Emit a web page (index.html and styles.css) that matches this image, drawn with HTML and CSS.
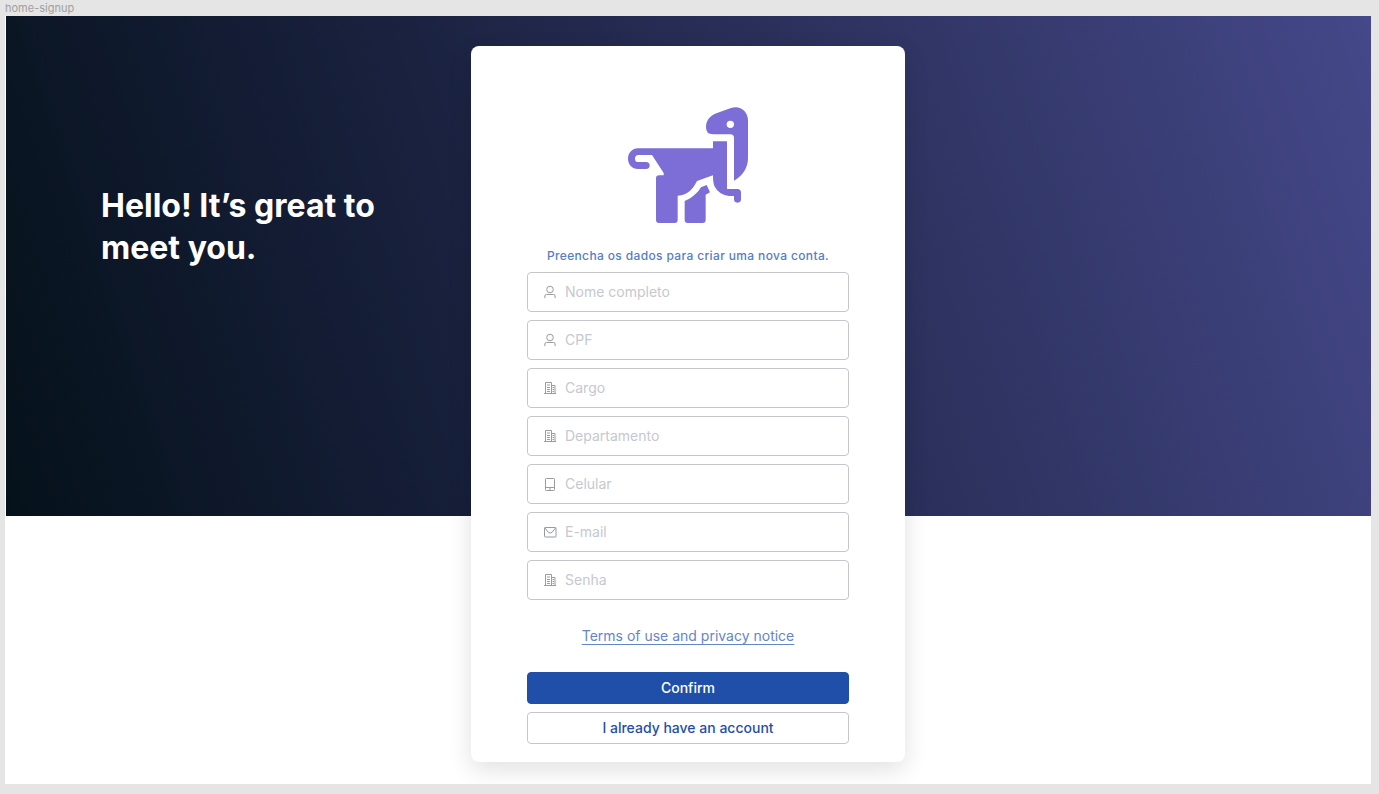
FILE: index.html
```html
<!DOCTYPE html>
<html lang="pt-BR">
<head>
<meta charset="utf-8">
<meta name="viewport" content="width=device-width, initial-scale=1">
<title>home-signup</title>
<link rel="stylesheet" href="styles.css">
</head>
<body>
<svg class="sprite" aria-hidden="true">
  <symbol id="user" viewBox="0 0 16 16"><circle cx="8" cy="5.500" r="3.300"/><path d="M2.900 14.200v-2.200a1.500 1.500 0 0 1 1.500-1.500h7.200a1.500 1.500 0 0 1 1.500 1.500v2.200"/></symbol>
  <symbol id="building" viewBox="0 0 16 16"><path d="M2 13.500h12M3.500 13.500v-11h6v11M9.500 5.500h3.500v8M5 5h3M5 7.500h3M5 9.500h3M5 11.500h3M10.500 7.500h1.500M10.500 9.500h1.500M10.500 11.500h1.500"/></symbol>
  <symbol id="tablet" viewBox="0 0 16 16"><rect x="3.500" y="2.500" width="9" height="12" rx=".8"/><path d="M3.500 11.500h9M8 12v2"/></symbol>
  <symbol id="mail" viewBox="0 0 16 16"><rect x="2.500" y="3.500" width="11.500" height="9.500" rx=".6"/><path d="M3 4l3.200 4.200q2 1.800 4 0L13.500 4"/></symbol>
</svg>
<div class="frame-label">home-signup</div>
<main class="frame">
  <section class="hero">
    <h1 class="hero-title">Hello! It’s great to meet you.</h1>
  </section>
  <form class="card">
    <svg class="logo" viewBox="24 21 360 348" role="img" aria-label="Dinosaur">
      <path d="M258 82C258 62 270 47 289 40L333 24C360 15 384 34 384 61V174C384 204 368 228 342 242V114Q342 103 331 103H279Q258 103 258 82Z"/>
      <path d="M279 124H321V267H352Q363 267 363 278V298Q363 308 352.500 308Q342 308 342 298V288H327Q296 284 283 258Q279 248 279 226L231 243C219 266 205 285 173 287V360Q173 369 164 369H117Q108 369 108 360V235Q108 226 117 226H131V219L96 165H55Q45 166 45 176Q45 186 55 186H78Q89 187 89 196Q89 207 78 207H54C36 207 24 193 24 176C24 158 37 145 54 145H279Z"/>
      <path d="M194 303C216 294 231 281 243 262L260 255L270 277L257 284V360Q257 369 248 369H203Q194 369 194 360Z"/>
      <circle class="logo-eye" cx="331" cy="73" r="11"/>
    </svg>
    <p class="intro">Preencha os dados para criar uma nova conta.</p>
    <div class="fields">
      <label class="field"><svg class="icon"><use href="#user"/></svg><input class="field-input" type="text" aria-label="Nome completo" placeholder="Nome completo"></label>
      <label class="field"><svg class="icon"><use href="#user"/></svg><input class="field-input" type="text" aria-label="CPF" placeholder="CPF"></label>
      <label class="field"><svg class="icon"><use href="#building"/></svg><input class="field-input" type="text" aria-label="Cargo" placeholder="Cargo"></label>
      <label class="field"><svg class="icon"><use href="#building"/></svg><input class="field-input" type="text" aria-label="Departamento" placeholder="Departamento"></label>
      <label class="field"><svg class="icon"><use href="#tablet"/></svg><input class="field-input" type="tel" aria-label="Celular" placeholder="Celular"></label>
      <label class="field"><svg class="icon"><use href="#mail"/></svg><input class="field-input" type="email" aria-label="E-mail" placeholder="E-mail"></label>
      <label class="field"><svg class="icon"><use href="#building"/></svg><input class="field-input" type="password" aria-label="Senha" placeholder="Senha"></label>
    </div>
    <a class="terms" href="#">Terms of use and privacy notice</a>
    <div class="actions">
      <button class="button button-primary" type="submit">Confirm</button>
      <button class="button" type="button">I already have an account</button>
    </div>
  </form>
</main>
</body>
</html>
```
FILE: styles.css
```css
* { box-sizing: border-box; }

body {
  margin: 0;
  min-height: 100vh;
  padding: 0 8px 10px 5px;
  display: flex;
  flex-direction: column;
  background: #e5e5e5;
  font-family: Inter, "Liberation Sans", sans-serif;
}

.sprite { display: none; }

.frame-label {
  height: 16px;
  color: #a0a0a0;
  font-size: 11px;
  line-height: 16px;
}

.frame {
  flex: 1;
  display: grid;
  grid-template-columns: 1fr;
  grid-template-rows: 500px 1fr;
  background: #fff;
  overflow: hidden;
}

.hero {
  grid-area: 1 / 1 / 2 / 2;
  margin-left: 1px;
  padding: 169px 95px;
  background: linear-gradient(72deg, #05111a 0%, #18203c 33%, #2d325f 64%, #454889 100%);
}

.hero-title {
  max-width: 300px;
  margin: 0;
  color: #fff;
  font-size: 32px;
  font-weight: 700;
  line-height: 42px;
}

.card {
  grid-area: 1 / 1 / 3 / 2;
  justify-self: center;
  align-self: start;
  width: 100%;
  max-width: 434px;
  margin: 30px 0 22px;
  padding: 61px 56px 18px;
  display: flex;
  flex-direction: column;
  align-items: center;
  border-radius: 8px;
  background: #fff;
  box-shadow: 0 8px 24px rgba(0, 0, 0, 0.12);
}

.logo {
  width: 120px;
  height: 116px;
  fill: #7c6ed6;
}

.logo-eye { fill: #fff; }

.intro {
  margin: 25px 0 8px;
  color: #557dc4;
  font-size: 12px;
  font-weight: 500;
  line-height: 16px;
  letter-spacing: 0.03em;
}

.fields,
.actions {
  width: 100%;
  display: flex;
  flex-direction: column;
  gap: 8px;
}

.field {
  height: 40px;
  padding: 0 14px;
  display: flex;
  align-items: center;
  gap: 7px;
  border: 1px solid #c5c6cc;
  border-radius: 4px;
}

.icon {
  flex: none;
  width: 16px;
  height: 16px;
  fill: none;
  stroke: #999ba2;
  stroke-width: 1;
}

.field-input {
  flex: 1;
  min-width: 0;
  padding: 0;
  border: 0;
  outline: 0;
  background: none;
  color: #333;
  font: 400 14px/20px Inter, "Liberation Sans", sans-serif;
}

.field-input::placeholder { color: #c5c8d0; }

.terms {
  margin: 26px 0;
  color: #6386c8;
  font-size: 14px;
  font-weight: 400;
  line-height: 20px;
  text-underline-offset: 3px;
}

.button {
  height: 32px;
  border: 1px solid #c5c6cc;
  border-radius: 4px;
  background: #fff;
  color: #1f4fa9;
  font: 500 14px/20px Inter, "Liberation Sans", sans-serif;
}

.button-primary {
  border-color: #1f4fa9;
  background: #1f4fa9;
  color: #fff;
}
```
